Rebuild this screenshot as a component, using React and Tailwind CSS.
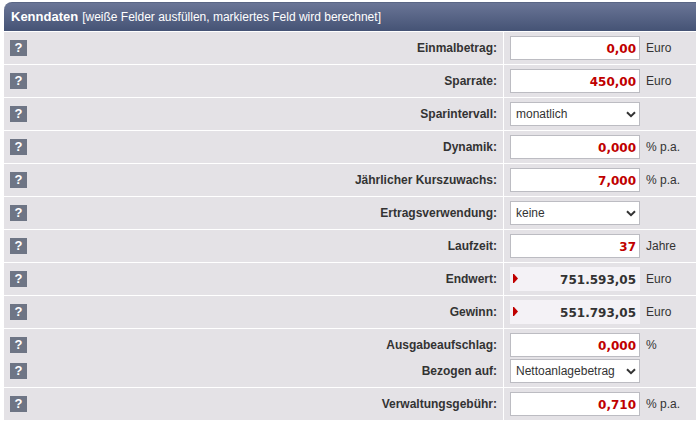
/**
 * Kenndaten form of the savings plan calculator
 */
import React, { useState } from 'react';

// Fields in the same inner list share one row
const ROWS = [
  [{ id: 'einmalbetrag', label: 'Einmalbetrag', unit: 'Euro', value: '0,00' }],
  [{ id: 'sparrate', label: 'Sparrate', unit: 'Euro', value: '450,00' }],
  [
    {
      id: 'sparintervall',
      label: 'Sparintervall',
      value: 'monatlich',
      options: ['monatlich', 'vierteljährlich', 'halbjährlich', 'jährlich'],
    },
  ],
  [{ id: 'dynamik', label: 'Dynamik', unit: '% p.a.', value: '0,000' }],
  [{ id: 'kurszuwachs', label: 'Jährlicher Kurszuwachs', unit: '% p.a.', value: '7,000' }],
  [
    {
      id: 'ertragsverwendung',
      label: 'Ertragsverwendung',
      value: 'keine',
      options: ['keine', 'Ausschüttung', 'Thesaurierung'],
    },
  ],
  [{ id: 'laufzeit', label: 'Laufzeit', unit: 'Jahre', value: '37' }],
  [{ id: 'endwert', label: 'Endwert', unit: 'Euro', value: '751.593,05', computed: true }],
  [{ id: 'gewinn', label: 'Gewinn', unit: 'Euro', value: '551.793,05', computed: true }],
  [
    { id: 'ausgabeaufschlag', label: 'Ausgabeaufschlag', unit: '%', value: '0,000' },
    {
      id: 'bezug',
      label: 'Bezogen auf',
      value: 'Nettoanlagebetrag',
      options: ['Nettoanlagebetrag', 'Bruttoanlagebetrag'],
    },
  ],
  [{ id: 'verwaltungsgebuehr', label: 'Verwaltungsgebühr', unit: '% p.a.', value: '0,710' }],
];

function HelpButton({ label }) {
  return (
    <button
      type="button"
      title={`Hilfe zu ${label}`}
      className="flex h-4 w-[17px] items-center justify-center bg-[#6e7585] text-[13px] font-bold leading-4 text-white"
    >
      ?
    </button>
  );
}

function NumberInput({ field, value, onChange }) {
  if (field.computed) {
    return (
      <div className="relative h-6 w-[130px]">
        <input
          id={field.id}
          readOnly
          value={value}
          className="h-6 w-full bg-[#f4f2f6] px-1 pt-0.5 text-right font-[Verdana,'DejaVu_Sans',sans-serif] text-xs font-bold text-[#333333] outline-none"
        />
        <svg viewBox="0 0 5 9" className="absolute left-[3px] top-[7px] h-[9px] w-[5px] fill-[#c00000]">
          <path d="M0 0 H1 L5 4.5 L1 9 H0 Z" />
        </svg>
      </div>
    );
  }
  return (
    <input
      id={field.id}
      value={value}
      onChange={onChange}
      className="h-6 w-[130px] border border-[#bcbcc2] bg-white px-[3px] pt-0.5 text-right font-[Verdana,'DejaVu_Sans',sans-serif] text-xs font-bold text-[#c00000] outline-none"
    />
  );
}

function Select({ field, value, onChange }) {
  return (
    <div className="relative h-6 w-[130px]">
      <select
        id={field.id}
        value={value}
        onChange={onChange}
        className="h-6 w-full appearance-none border border-[#bcbcc2] bg-white pl-[5px] pr-5 text-xs text-[#333333] outline-none"
      >
        {field.options.map((o) => (
          <option key={o}>{o}</option>
        ))}
      </select>
      <svg
        viewBox="0 0 10 7"
        className="pointer-events-none absolute right-1 top-[9px] h-[7px] w-2.5 fill-none stroke-[#333333] stroke-2"
      >
        <path d="M1 1.3 L5 5.2 L9 1.3" />
      </svg>
    </div>
  );
}

function Row({ fields, values, onChange }) {
  return (
    <div className="flex bg-[#e4e2e6]">
      <div className="flex flex-1 flex-col gap-0.5 px-1.5 py-1">
        {fields.map((f) => (
          <div key={f.id} className="flex h-6 items-center justify-between">
            <HelpButton label={f.label} />
            <label htmlFor={f.id} className="font-bold">
              {f.label}:
            </label>
          </div>
        ))}
      </div>
      <div className="flex w-[193px] flex-col gap-0.5 border-l border-white py-1 pl-1.5">
        {fields.map((f) => {
          const Control = f.options ? Select : NumberInput;
          return (
            <div key={f.id} className="flex h-6 items-center gap-1.5">
              <Control field={f} value={values[f.id]} onChange={(e) => onChange(f.id, e.target.value)} />
              {f.unit && <span>{f.unit}</span>}
            </div>
          );
        })}
      </div>
    </div>
  );
}

export default function App() {
  const [values, setValues] = useState(() =>
    Object.fromEntries(ROWS.flat().map((f) => [f.id, f.value]))
  );

  const set = (id, value) => setValues({ ...values, [id]: value });

  return (
    <form className="flex flex-col gap-px bg-white pl-1 pt-0.5 pb-px font-['Liberation_Sans',Arial,sans-serif] text-xs text-[#333333]">
      {/* Header */}
      <div className="flex h-[29px] items-center gap-1 rounded-tl-lg border-t border-[#5a6685] bg-linear-to-b from-[#6a7596] to-[#455375] px-[7px] text-white">
        <h2 className="text-[13px] font-bold">Kenndaten</h2>
        <span>[weiße Felder ausfüllen, markiertes Feld wird berechnet]</span>
      </div>

      {ROWS.map((fields) => (
        <Row key={fields[0].id} fields={fields} values={values} onChange={set} />
      ))}
    </form>
  );
}
